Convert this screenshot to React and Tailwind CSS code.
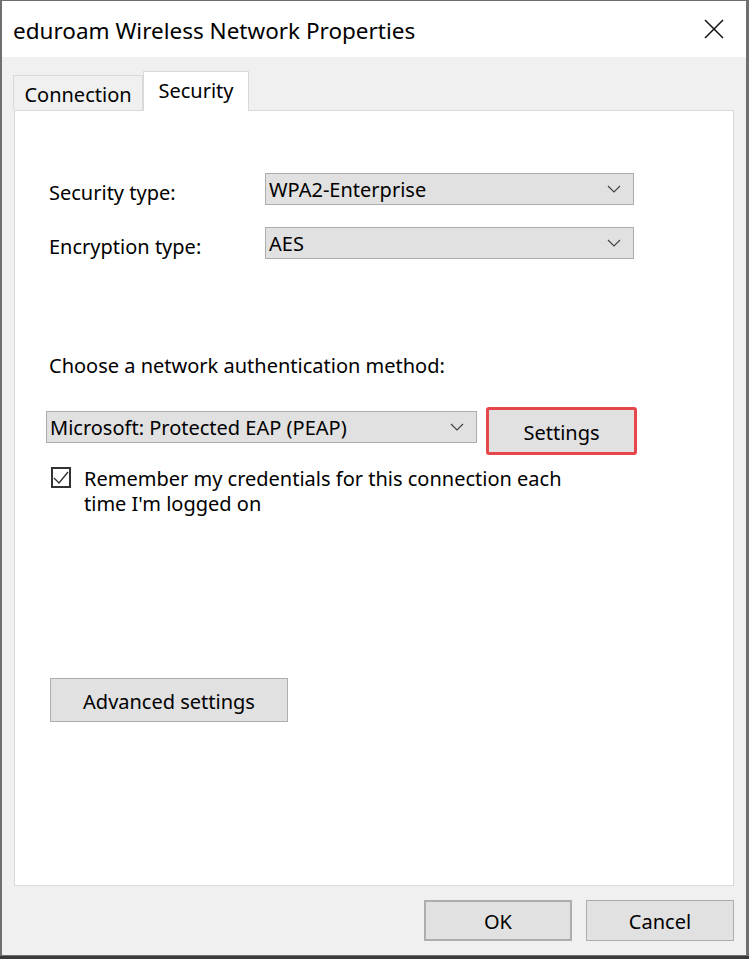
import React, { useState } from 'react';

const font = { fontFamily: '"Noto Sans", "Open Sans", sans-serif' };

const Chevron = () => (
  <svg width="14" height="8" viewBox="0 0 14 8" className="shrink-0">
    <path d="M1 1 L7 7 L13 1" fill="none" stroke="#404040" strokeWidth="1.1" />
  </svg>
);

const Dropdown = ({ value, className }) => (
  <div className={`flex items-center justify-between h-[32px] bg-[#e1e1e1] border border-[#adadad] pl-[3px] pr-[12px] text-[20px] text-black ${className}`}>
    <span className="leading-none pt-[2px]">{value}</span>
    <Chevron />
  </div>
);

const Button = ({ children, className }) => (
  <button className={`bg-[#e1e1e1] border border-[#adadad] text-[20px] text-black flex items-center justify-center ${className}`}>
    {children}
  </button>
);

export default function App() {
  const [remember, setRemember] = useState(true);

  return (
    <div className="w-[749px] h-[959px] bg-[#3a3a3a] overflow-hidden" style={font}>
      <div className="w-[749px] h-[956px] flex flex-col bg-[#f0f0f0] border-t border-l-2 border-r-[3px] border-b border-[#6f6f6f]">
        {/* Title bar */}
        <div className="h-[56px] bg-white flex items-center justify-between pl-[11px] pr-[22px] pt-[4px] shrink-0">
          <span className="text-[22.5px] text-black">eduroam Wireless Network Properties</span>
          <svg width="20" height="20" viewBox="0 0 20 20" className="-mt-[4px]">
            <path d="M1 1 L19 19 M19 1 L1 19" stroke="#111" strokeWidth="1.5" />
          </svg>
        </div>

        {/* Tabs */}
        <div className="flex items-end pl-[11px] pt-[13px] h-[53px] shrink-0">
          <div className="h-[35px] w-[130px] border border-b-0 border-[#d9d9d9] bg-[#f0f0f0] flex items-center justify-center pt-[3px] text-[20px] text-black">
            Connection
          </div>
          <div className="h-[40px] w-[106px] border border-b-0 border-[#d9d9d9] bg-white flex items-start justify-center pt-[4px] text-[20px] text-black -mb-px relative z-10">
            Security
          </div>
        </div>

        {/* Panel */}
        <div className="mx-[12px] h-[776px] bg-white border border-[#d9d9d9] shrink-0 relative">
          <div className="pt-[62px] pl-[34px]">
            <div className="flex items-start h-[32px]">
              <span className="w-[216px] text-[20px] text-black leading-[32px] mt-[4px]">Security type:</span>
              <Dropdown value="WPA2-Enterprise" className="w-[369px]" />
            </div>
            <div className="flex items-start h-[32px] mt-[22px]">
              <span className="w-[216px] text-[20px] text-black leading-[32px] mt-[4px]">Encryption type:</span>
              <Dropdown value="AES" className="w-[369px]" />
            </div>

            <div className="mt-[92px] text-[20px] text-black leading-[30px]">
              Choose a network authentication method:
            </div>
            <div className="flex items-start mt-[26px] -ml-[3px]">
              <Dropdown value="Microsoft: Protected EAP (PEAP)" className="w-[431px] mt-[4px]" />
              <div className="ml-[9px] rounded-[3px] border-[3px] border-[#e5474b] p-0">
                <Button className="w-[145px] h-[42px] border-0 pt-[3px]">Settings</Button>
              </div>
            </div>

            <label className="flex items-start mt-[11px] ml-[2px] cursor-pointer" onClick={() => setRemember(!remember)}>
              <span className="w-[20px] h-[21px] border-2 border-[#333] flex items-center justify-center mt-[1px] shrink-0 bg-white">
                {remember && (
                  <svg width="16" height="14" viewBox="0 0 16 14">
                    <path d="M1 7 L6 12 L15 1" fill="none" stroke="#333" strokeWidth="1.4" />
                  </svg>
                )}
              </span>
              <span className="ml-[13px] text-[20px] text-black leading-[25px] w-[500px]">
                Remember my credentials for this connection each time I'm logged on
              </span>
            </label>

            <Button className="w-[238px] h-[44px] mt-[162px] ml-[1px] pt-[3px]">Advanced settings</Button>
          </div>
        </div>

        {/* Footer */}
        <div className="flex justify-end gap-[14px] pr-[12px] pt-[14px]">
          <Button className="w-[148px] h-[41px] border-2 border-[#0078d7] pt-[2px]">OK</Button>
          <Button className="w-[148px] h-[41px] pt-[2px]">Cancel</Button>
        </div>
      </div>
    </div>
  );
}
